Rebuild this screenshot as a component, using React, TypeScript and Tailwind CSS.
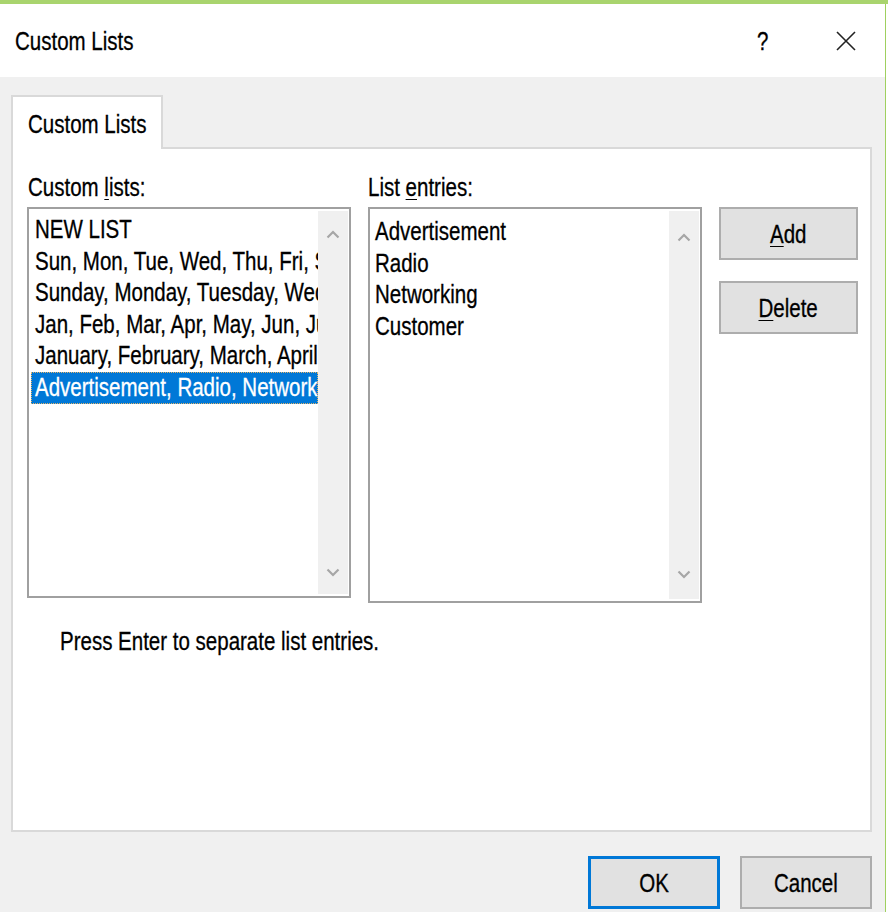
import React from "react";

// only the part that shows in the narrow box is kept
const customLists = [
  "NEW LIST",
  "Sun, Mon, Tue, Wed, Thu, Fri, Sat",
  "Sunday, Monday, Tuesday, Wed",
  "Jan, Feb, Mar, Apr, May, Jun, Jul",
  "January, February, March, April",
  "Advertisement, Radio, Networking",
];

const entries = ["Advertisement", "Radio", "Networking", "Customer"];

// the dialog text is a tall, narrow Segoe UI; squeeze a regular face to match
function T({ children, center }: { children: React.ReactNode; center?: boolean }) {
  return (
    <span
      className={
        "inline-block whitespace-nowrap scale-x-[0.82] " + (center ? "origin-center" : "origin-left")
      }
    >
      {children}
    </span>
  );
}

function Key({ children }: { children: React.ReactNode }) {
  return <span className="underline underline-offset-[3px] decoration-1">{children}</span>;
}

function Chevron({ down }: { down?: boolean }) {
  return (
    <svg width="14" height="9" viewBox="0 0 14 9" className="block">
      <path
        d={down ? "M1.5 1.5 L7 7 L12.5 1.5" : "M1.5 7.5 L7 2 L12.5 7.5"}
        fill="none"
        stroke="#a6a6a6"
        strokeWidth="2.2"
      />
    </svg>
  );
}

function ScrollBar({ upTop, downBottom }: { upTop: string; downBottom: string }) {
  return (
    <div className="w-[30px] bg-[#f0f0f0] flex flex-col items-center justify-between">
      <div className={upTop}>
        <Chevron />
      </div>
      <div className={downBottom}>
        <Chevron down />
      </div>
    </div>
  );
}

function DialogButton({
  children,
  primary,
  className,
}: {
  children: React.ReactNode;
  primary?: boolean;
  className?: string;
}) {
  return (
    <div
      className={
        "h-[53px] bg-[#e1e1e1] flex items-center justify-center text-black leading-[32px] " +
        (primary ? "border-[3px] border-[#0078d7] " : "border-2 border-[#adadad] ") +
        (className ?? "")
      }
    >
      <T center>{children}</T>
    </div>
  );
}

export default function App() {
  return (
    <div
      className="w-[888px] h-[912px] bg-white flex flex-col overflow-hidden text-[25px] text-black [-webkit-text-stroke:0.3px]"
      style={{ fontFamily: '"Liberation Sans", Arial, sans-serif' }}
    >
      {/* strip of the window behind */}
      <div className="h-[4px] bg-[#a9d46e] relative overflow-hidden shrink-0">
        <span className="absolute left-[540px] -top-[19px] text-[20px] leading-[22px] text-[#333]">Columns</span>
      </div>

      <div className="flex-1 flex">
        <div className="w-[885px] flex flex-col">
          {/* title bar */}
          <div className="h-[73px] bg-white flex items-center pl-[15px] pr-[29px] shrink-0 leading-[32px]">
            <T>Custom Lists</T>
            <span className="ml-auto w-[12px]">
              <T>?</T>
            </span>
            <svg width="20" height="20" viewBox="0 0 20 20" className="ml-[67px]">
              <path d="M1 1 L19 19 M19 1 L1 19" stroke="#222" strokeWidth="1.6" fill="none" />
            </svg>
          </div>

          {/* body */}
          <div className="flex-1 bg-[#f0f0f0] pl-[11px] pr-[13px] pt-[18px] flex flex-col">
            <div className="w-[152px] h-[54px] bg-white border-2 border-b-0 border-[#d9d9d9] -mb-[2px] relative z-10 pl-[15px] pt-[11px] leading-[32px]">
              <T>Custom Lists</T>
            </div>

            <div className="h-[685px] bg-white border-2 border-[#d9d9d9] pt-[22px] flex flex-col">
              <div className="flex pl-[14px]">
                {/* Custom lists */}
                <div className="w-[324px] flex flex-col">
                  <div className="leading-[32px] pl-[1px] mb-[4px]">
                    <T>
                      Custom <Key>l</Key>ists:
                    </T>
                  </div>
                  <div className="h-[391px] border-2 border-[#a0a0a0] flex py-[2px] pr-[1px]">
                    <div className="flex-1 min-w-0 pt-[3px] pl-[2px] overflow-hidden">
                      {customLists.map((item, i) => (
                        <div
                          key={item}
                          className={
                            "h-[31.6px] leading-[31.6px] pl-[4px] whitespace-nowrap overflow-hidden " +
                            (i === customLists.length - 1
                              ? "bg-[#0078d7] text-white outline-1 outline-dotted outline-[#e2b46a] -outline-offset-1"
                              : "")
                          }
                        >
                          <T>{item}</T>
                        </div>
                      ))}
                    </div>
                    <ScrollBar upTop="pt-[19px]" downBottom="pb-[17px]" />
                  </div>
                </div>

                {/* List entries */}
                <div className="w-[334px] ml-[17px] flex flex-col">
                  <div className="leading-[32px] mb-[4px]">
                    <T>
                      List <Key>e</Key>ntries:
                    </T>
                  </div>
                  <div className="h-[396px] border-2 border-[#a0a0a0] flex py-[2px] pr-[1px]">
                    <div className="flex-1 min-w-0 pt-[5px] pl-[5px] overflow-hidden">
                      {entries.map((item) => (
                        <div key={item} className="h-[31.7px] leading-[31.7px] whitespace-nowrap">
                          <T>{item}</T>
                        </div>
                      ))}
                    </div>
                    <ScrollBar upTop="pt-[22px]" downBottom="pb-[20px]" />
                  </div>
                </div>

                {/* Add / Delete */}
                <div className="w-[139px] ml-[17px] mt-[36px] flex flex-col gap-[21px]">
                  <DialogButton>
                    <Key>A</Key>dd
                  </DialogButton>
                  <DialogButton>
                    <Key>D</Key>elete
                  </DialogButton>
                </div>
              </div>

              <div className="mt-[22px] pl-[47px] leading-[32px]">
                <T>Press Enter to separate list entries.</T>
              </div>
            </div>

            <div className="flex justify-end gap-[20px] mt-[24px]">
              <DialogButton primary className="w-[132px]">
                OK
              </DialogButton>
              <DialogButton className="w-[132px]">Cancel</DialogButton>
            </div>
          </div>
        </div>
        <div className="w-[1px] bg-[#9fd05f]" />
        <div className="flex-1 bg-white" />
      </div>
    </div>
  );
}
